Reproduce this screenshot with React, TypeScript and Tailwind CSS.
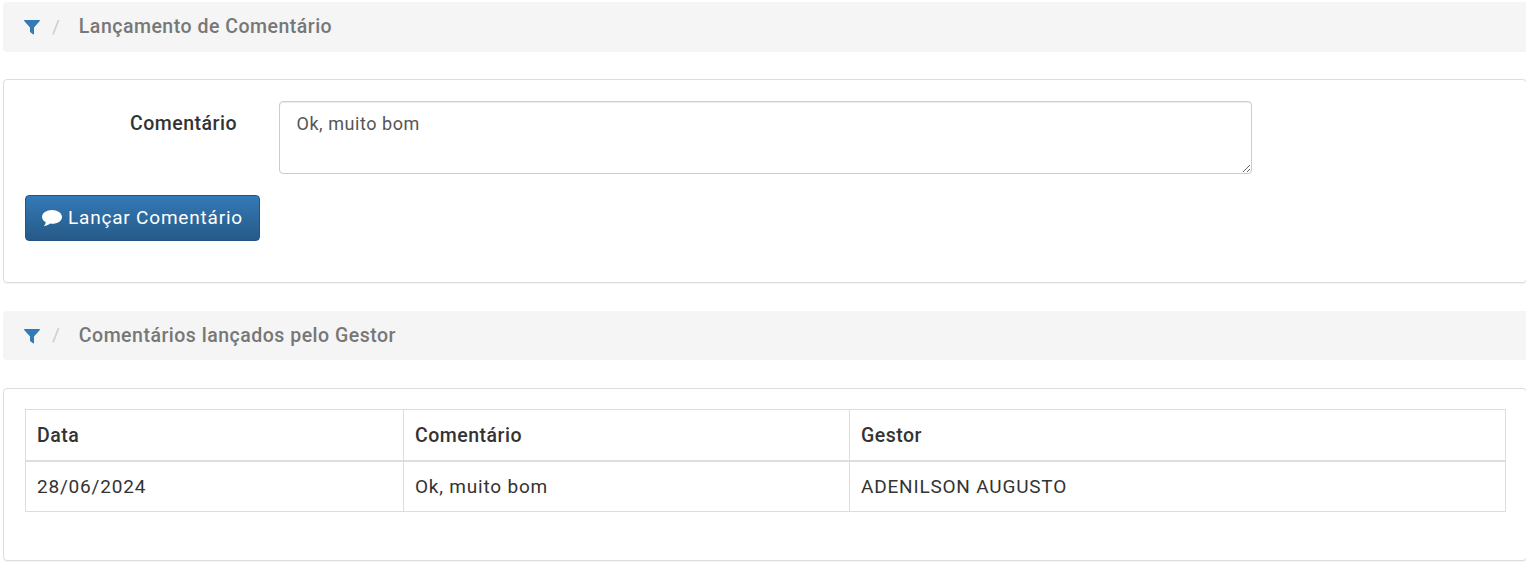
import React from 'react';

const FilterIcon = () => (
  <svg viewBox="0 0 16 16" className="w-[16px] h-[16px] text-[#337ab7]" fill="currentColor">
    <path d="M0.6 1h14.8c.5 0 .8.6.4 1L10 8.6V15c0 .4-.4.6-.7.4L6.4 13.2c-.2-.1-.4-.3-.4-.5V8.6L.2 2c-.4-.4-.1-1 .4-1z" />
  </svg>
);

const CommentIcon = () => (
  <svg viewBox="0 0 20 17" className="w-[20px] h-[17px]" fill="currentColor">
    <path d="M10 0C4.5 0 0 3 0 6.9c0 2.2 1.5 4.200 3.800 5.400-.2 1.300-.9 2.700-2 3.900 2.400-.3 4.600-1.300 6.200-2.600.7.100 1.300.200 2 .200 5.500 0 10-3 10-6.900S15.500 0 10 0z" />
  </svg>
);

function Crumb({ title, height }: { title: string; height: string }) {
  return (
    <div className={`${height} ml-[3px] bg-[#f5f5f5] rounded-l-[4px] flex items-center pl-[21px]`}>
      <FilterIcon />
      <span className="ml-[12px] text-[#ccc] text-[19px]">/</span>
      <span className="ml-[19px] text-[19.5px] font-medium text-[#777] tracking-[0.5px]">{title}</span>
    </div>
  );
}

export default function App() {
  return (
    <div className="bg-white min-h-screen pt-[2px] overflow-hidden text-[#333]" style={{ fontFamily: 'Roboto, sans-serif' }}>
      <Crumb title="Lançamento de Comentário" height="h-[50px]" />

      <div className="mt-[27px] ml-[3px] mr-[-1px] h-[204px] border border-[#ddd] rounded-[4px] shadow-[0_1px_1px_rgba(0,0,0,0.05)] pl-[21px] pt-[21px]">
        <div className="flex items-start">
          <label className="w-[212px] text-right text-[19.5px] font-medium pt-[10px] leading-[26px] tracking-[0.5px]">Comentário</label>
          <textarea
            defaultValue="Ok, muito bom"
            className="ml-[42px] w-[973px] h-[73px] border border-[#ccc] rounded-[4px] pl-[16.5px] pr-[17px] py-[9px] text-[18px] leading-[26px] text-[#555] tracking-[0.55px] shadow-[inset_0_1px_1px_rgba(0,0,0,0.075)] outline-none"
          />
        </div>
        <button className="mt-[21px] w-[235px] h-[46px] flex items-center justify-center gap-[6px] rounded-[4px] border border-[#245580] bg-gradient-to-b from-[#337ab7] to-[#265a88] text-white text-[19px] tracking-[0.8px]">
          <CommentIcon />
          Lançar Comentário
        </button>
      </div>

      <div className="mt-[28px]">
        <Crumb title="Comentários lançados pelo Gestor" height="h-[49px]" />
      </div>

      <div className="mt-[28px] ml-[3px] mr-[-1px] h-[173px] border border-[#ddd] rounded-[4px] shadow-[0_1px_1px_rgba(0,0,0,0.05)] pl-[21px] pt-[20px]">
        <table className="w-[1481px] table-fixed border-collapse text-[19px] tracking-[0.8px]">
          <colgroup>
            <col className="w-[378px]" />
            <col className="w-[446px]" />
            <col />
          </colgroup>
          <thead>
            <tr className="h-[51px] text-[19.5px] tracking-[0.5px]">
              <th className="border border-b-2 border-[#ddd] px-[11px] pt-[1px] text-left font-medium">Data</th>
              <th className="border border-b-2 border-[#ddd] px-[11px] pt-[1px] text-left font-medium">Comentário</th>
              <th className="border border-b-2 border-[#ddd] px-[11px] pt-[1px] text-left font-medium">Gestor</th>
            </tr>
          </thead>
          <tbody>
            <tr className="h-[51px]">
              <td className="border border-[#ddd] px-[11px] pt-[2px]">28/06/2024</td>
              <td className="border border-[#ddd] px-[11px] pt-[2px]">Ok, muito bom</td>
              <td className="border border-[#ddd] px-[11px] pt-[2px]">ADENILSON AUGUSTO</td>
            </tr>
          </tbody>
        </table>
      </div>
    </div>
  );
}
